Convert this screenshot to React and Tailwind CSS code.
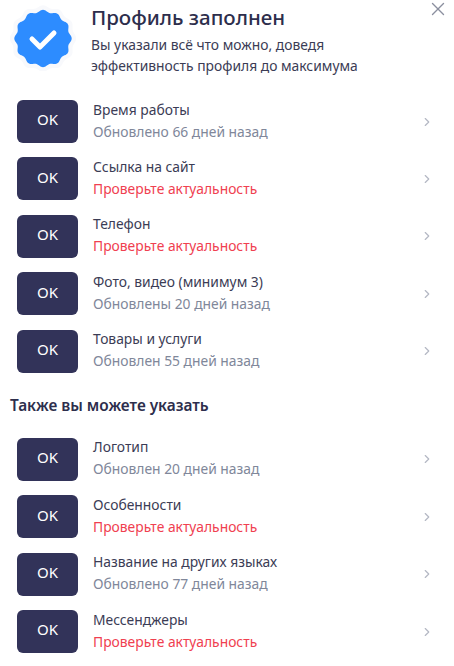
import React from 'react';
import { ChevronRight, X } from 'lucide-react';

const mainItems = [
  { title: 'Время работы', sub: 'Обновлено 66 дней назад' },
  { title: 'Ссылка на сайт', sub: 'Проверьте актуальность', warn: true },
  { title: 'Телефон', sub: 'Проверьте актуальность', warn: true },
  { title: 'Фото, видео (минимум 3)', sub: 'Обновлены 20 дней назад' },
  { title: 'Товары и услуги', sub: 'Обновлен 55 дней назад' },
];

const extraItems = [
  { title: 'Логотип', sub: 'Обновлен 20 дней назад' },
  { title: 'Особенности', sub: 'Проверьте актуальность', warn: true },
  { title: 'Название на других языках', sub: 'Обновлено 77 дней назад' },
  { title: 'Мессенджеры', sub: 'Проверьте актуальность', warn: true },
];

// wavy badge outline
const scallop = (cx, cy, r, amp, waves) => {
  const pts = [];
  for (let i = 0; i < 180; i++) {
    const a = (i / 180) * Math.PI * 2;
    const rad = r + amp * Math.cos(a * waves);
    pts.push(`${(cx + rad * Math.sin(a)).toFixed(2)},${(cy - rad * Math.cos(a)).toFixed(2)}`);
  }
  return pts.join(' ');
};

const Badge = () => (
  <svg width="66" height="66" viewBox="0 0 66 66" className="shrink-0">
    <polygon points={scallop(33, 33.5, 32, 1.2, 12)} fill="#f8f9fc" />
    <polygon points={scallop(33, 33.5, 27.5, 1.2, 12)} fill="#2d8cff" />
    <path d="M22 34l8 8 14-14" fill="none" stroke="#fff" strokeWidth="5" strokeLinecap="round" strokeLinejoin="round" />
  </svg>
);

const Row = ({ title, sub, warn }) => (
  <div className="flex items-center h-[43px] pl-[17px] pr-[20px]">
    <div className="w-[61px] h-[43px] pb-[4px] rounded-[6px] bg-[#323359] text-white text-[15px] flex items-center justify-center shrink-0">
      OK
    </div>
    <div className="ml-[15px] pb-[2px] flex-1 min-w-0">
      <div className="text-[13.85px] leading-[20px] text-[#3b3c55]">{title}</div>
      <div className={`text-[13.85px] leading-[20px] mt-[2px] ${warn ? 'text-[#f04050]' : 'text-[#80879a]'}`}>{sub}</div>
    </div>
    <ChevronRight className="w-[14px] h-[14px] text-[#b4b8c4]" strokeWidth={2} />
  </div>
);

export default function App() {
  return (
    <div className="relative w-[454px] h-[666px] overflow-hidden bg-white font-['Noto_Sans',sans-serif]">
      <button className="absolute top-[-2px] right-[5px] text-[#8b8f9f]">
        <X className="w-[22px] h-[22px]" strokeWidth={1.5} />
      </button>

      <div className="flex pl-[10px] pt-[5px] h-[100px]">
        <Badge />
        <div className="ml-[15px] -mt-[1px]">
          <h1 className="text-[20.5px] leading-[26px] font-medium text-[#2d2e4c]">Профиль заполнен</h1>
          <p className="mt-[4px] text-[13.85px] leading-[21px] text-[#3b3c55]">
            Вы указали всё что можно, доведя
            <br />
            эффективность профиля до максимума
          </p>
        </div>
      </div>

      <div className="flex flex-col gap-[14.45px]">
        {mainItems.map((item) => (
          <Row key={item.title} {...item} />
        ))}
      </div>

      <h2 className="mt-[23px] mb-[22.1px] pl-[10px] h-[20px] text-[15.4px] leading-[20px] font-semibold text-[#2d2e4c]">
        Также вы можете указать
      </h2>

      <div className="flex flex-col gap-[14.45px]">
        {extraItems.map((item) => (
          <Row key={item.title} {...item} />
        ))}
      </div>
    </div>
  );
}
